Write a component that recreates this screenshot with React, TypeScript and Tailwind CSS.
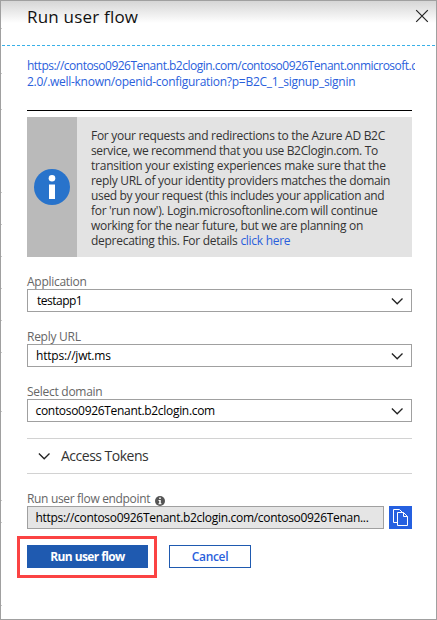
import React from "react";

function Chevron() {
  return (
    <svg width="12" height="8" viewBox="0 0 12 8" fill="none" stroke="#222" strokeWidth="1.3">
      <path d="M0.9 1.5L6.2 6.8L11.5 1.5" />
    </svg>
  );
}

function Field({ label, value, valueClass }: { label: string; value: string; valueClass: string }) {
  return (
    <div className="mb-[15px]">
      <div className="h-[17px] whitespace-nowrap pt-0.5 text-[12px] leading-4 tracking-[-0.27px] text-[#666]">{label}</div>
      <div className="flex h-[23px] items-center justify-between border border-[#a0a0a0] pr-2">
        <span className={"text-[12px] leading-4 text-black " + valueClass}>{value}</span>
        <Chevron />
      </div>
    </div>
  );
}

const notice = [
  { text: "For your requests and redirections to the Azure AD B2C", tracking: "tracking-[-0.29px]" },
  { text: "service, we recommend that you use B2Clogin.com. To", tracking: "tracking-[-0.35px]" },
  { text: "transition your existing experiences make sure that the", tracking: "tracking-[-0.24px]" },
  { text: "reply URL of your identity providers matches the domain", tracking: "tracking-[-0.31px]" },
  { text: "used by your request (this includes your application and", tracking: "tracking-[-0.35px]" },
  { text: "for 'run now'). Login.microsoftonline.com will continue", tracking: "tracking-[-0.31px]" },
  { text: "working for the near future, but we are planning on", tracking: "tracking-[-0.3px]" },
];

const ticks = [28, 73, 109, 192, 224, 256, 288, 320, 352, 411, 500, 522, 605];

export default function App() {
  return (
    <div className="relative h-[620px] w-[437px] overflow-hidden border border-[#a0a0a0] bg-white font-['Open_Sans','Noto_Sans',sans-serif]">
      {ticks.map((y) => (
        <i key={y} className="absolute left-0 h-px w-px bg-[#c8c8c8]" style={{ top: y - 1 }} />
      ))}
      <header className="flex h-11 items-start justify-between bg-linear-to-b from-[#d6d6d6] to-white to-50% pl-[26px]">
        <h1 className="mt-1 whitespace-nowrap text-[17px] leading-6 tracking-[0.2px] text-[#111]">Run user flow</h1>
        <svg className="mt-2 mr-[7px]" width="14" height="14" viewBox="0 0 14 14" fill="none" stroke="#222" strokeWidth="1.2">
          <path d="M1.2 1.2L12.8 12.8M12.8 1.2L1.2 12.8" />
        </svg>
      </header>
      <div className="ml-px h-px bg-[repeating-linear-gradient(90deg,#38b0e8_0px,#38b0e8_3px,#ffffff_3px,#ffffff_5px)]" />
      <main className="ml-[26px] w-[385px]">
        <div className="mt-3 h-[52px] w-[388px] overflow-hidden whitespace-nowrap text-[12px] leading-4 text-[#2a5fdc]">
          <div className="tracking-[-0.51px]">https://contoso0926Tenant.b2clogin.com/contoso0926Tenant.onmicrosoft.c</div>
          <div className="tracking-[-0.28px]">2.0/.well-known/openid-configuration?p=B2C_1_signup_signin</div>
        </div>
        <div className="h-px bg-black" />
        <section className="mt-1.5 flex h-[140px] bg-[#e3e3e3]">
          <div className="flex w-[50px] items-center justify-center bg-[#bababa]">
            <svg width="36" height="36" viewBox="0 0 36 36">
              <circle cx="18" cy="18" r="18" fill="#2873cb" />
              <circle cx="18" cy="9.3" r="3.3" fill="#fff" />
              <path d="M15 15.5H21V30H15Z" fill="#fff" />
            </svg>
          </div>
          <div className="pt-[11px] pl-[14px] whitespace-nowrap text-[12px] leading-[15px] text-[#333]">
            {notice.map((line) => (
              <div key={line.text} className={line.tracking}>{line.text}</div>
            ))}
            <div className="tracking-[-0.28px]">
              deprecating this. For details <a className="text-[#2a5fdc]">click here</a>
            </div>
          </div>
        </section>
        <div className="mt-[15px] mb-4">
          <Field label="Application" value="testapp1" valueClass="pl-[9px] tracking-[-0.5px]" />
          <Field label="Reply URL" value="https://jwt.ms" valueClass="pl-2 tracking-[-0.2px]" />
          <Field label="Select domain" value="contoso0926Tenant.b2clogin.com" valueClass="pl-[7.5px] tracking-[-0.31px]" />
        </div>
        <div className="flex h-9 items-center border-y border-[#d2d2d2] pl-[11px]">
          <Chevron />
          <span className="ml-[11px] text-[14px] leading-5 tracking-[-0.5px] text-[#333]">Access Tokens</span>
        </div>
        <div className="mt-[17px] flex h-[15px] items-center gap-1 text-[12px] tracking-[-0.33px] text-[#666]">
          <span className="pt-px">Run user flow endpoint</span>
          <svg className="mt-1 ml-px" width="10" height="10" viewBox="0 0 10 10">
            <circle cx="5" cy="5" r="5" fill="#555" />
            <path d="M4.2 1.5H5.8V3H4.2ZM3.5 4H5.8V7.3H6.5V8.2H3.5V7.3H4.2V4.9H3.5Z" fill="#fff" />
          </svg>
        </div>
        <div className="flex justify-between">
          <div className="flex h-[23px] w-[357px] items-center border border-[#a0a0a0] bg-[#e5e5e5] pl-[7.5px] text-[12px] tracking-[-0.3px] whitespace-nowrap text-black">
            https://contoso0926Tenant.b2clogin.com/contoso0926Tenan...
          </div>
          <button className="h-[23px] w-[23px] bg-[#2560e0]">
            <svg width="23" height="23" viewBox="0 0 23 23" fill="none" stroke="#fff" strokeWidth="1">
              <path d="M8 16.5H4.5V3.5H10.5L13.5 6.5" />
              <path d="M8.5 6.5H14.5L18.5 10.5V19.5H8.5ZM14.5 6.5V10.5H18.5" fill="#2560e0" />
            </svg>
          </button>
        </div>
        <div className="relative mt-4 flex gap-[21px]">
          <button className="h-[23px] w-[121px] bg-[#1f5ab0] text-[12px] font-bold tracking-[-0.6px] text-white">Run user flow</button>
          <button className="h-[23px] w-[82px] border border-[#1f5ab0] text-[12px] font-semibold tracking-[-0.35px] text-[#2a5fdc]">Cancel</button>
          <div className="absolute -top-[9px] -left-[10px] h-[42px] w-[140px] border-3 border-[#fb4343]" />
        </div>
      </main>
    </div>
  );
}
